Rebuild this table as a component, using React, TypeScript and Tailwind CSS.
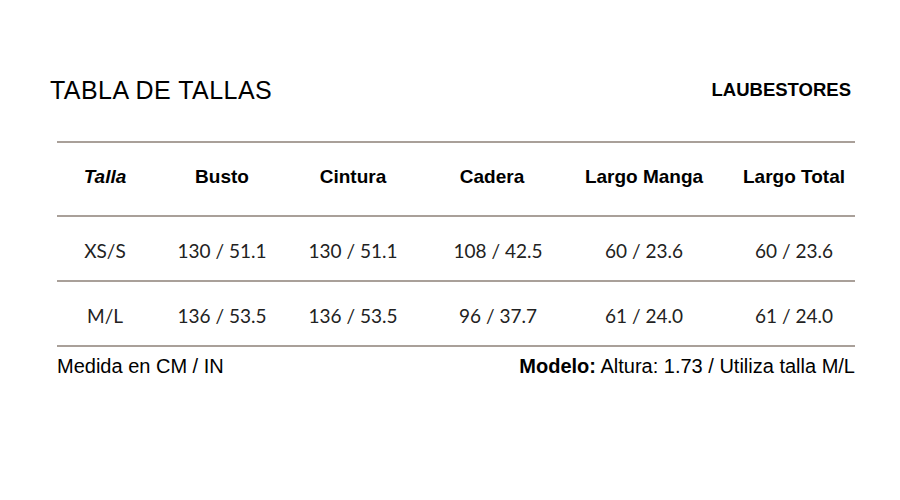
const headers = ['Talla', 'Busto', 'Cintura', 'Cadera', 'Largo Manga', 'Largo Total'];

const rows = [
  ['XS/S', '130 / 51.1', '130 / 51.1', '108 / 42.5', '60 / 23.6', '60 / 23.6'],
  ['M/L', '136 / 53.5', '136 / 53.5', '96 / 37.7', '61 / 24.0', '61 / 24.0'],
];

const Rule = () => <div className="h-[2px] bg-[#a9a099]" />;

export default function App() {
  return (
    <div className="w-[900px] h-[500px] bg-white text-black font-['Liberation_Sans',Arial,sans-serif]">
      <div className="flex items-center justify-between pt-[75px] pl-[50px] pr-[49px]">
        <h1 className="text-[25px] leading-[30px] tracking-[0.45px]">TABLA DE TALLAS</h1>
        <span className="text-[18.5px] font-bold leading-[30px]">LAUBESTORES</span>
      </div>

      <div className="mt-[36px] ml-[57px] w-[798px]">
        <Rule />
        <div className="grid grid-cols-[96px_138px_124px_154px_150px_136px] h-[72px] items-center pb-[4px] text-[19px] font-bold">
          {headers.map((h, i) => (
            <div key={h} className={`text-center ${i === 0 ? 'italic' : ''} ${i === 5 ? 'pl-[14px]' : ''}`}>
              {h}
            </div>
          ))}
        </div>
        {rows.map(r => (
          <div key={r[0]}>
            <Rule />
            <div className="grid grid-cols-[96px_138px_124px_154px_150px_136px] h-[63px] items-center pt-[6px] text-[19px] text-[#222] font-['Lato',sans-serif]">
              {r.map((v, i) => (
                <div key={i} className={`text-center ${i === 3 ? 'pl-[12px]' : ''} ${i === 5 ? 'pl-[14px]' : ''}`}>
                  {v}
                </div>
              ))}
            </div>
          </div>
        ))}
        <Rule />
        <div className="flex justify-between pt-[7px] text-[20px] leading-[24px]">
          <span>Medida en CM / IN</span>
          <span>
            <b>Modelo:</b> Altura: 1.73 / Utiliza talla M/L
          </span>
        </div>
      </div>
    </div>
  );
}
